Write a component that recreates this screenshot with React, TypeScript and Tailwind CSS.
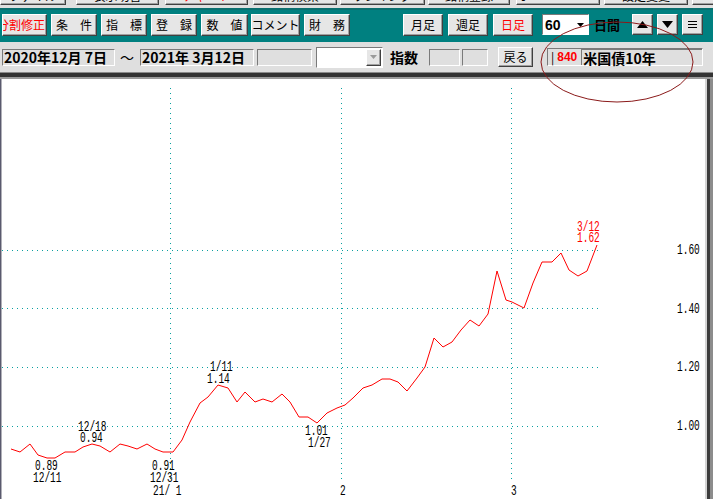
import React from 'react';

const jp = "font-['Noto_Sans_CJK_JP','Noto_Sans',sans-serif]";
const raised =
  'border border-t-white border-l-white border-b-[#404040] border-r-[#404040] shadow-[inset_-1px_-1px_0_#a0a0a0]';
const sunken = 'border border-t-[#7a7a7a] border-l-[#7a7a7a] border-b-white border-r-white';

function Btn({ label, className = '', red = false }: { label: React.ReactNode; className?: string; red?: boolean }) {
  return (
    <div
      className={`h-[22px] shrink-0 flex items-center justify-center overflow-hidden bg-[#e6e6e6] ${raised} text-[12px] leading-none whitespace-nowrap ${
        red ? 'text-[#ff0000]' : 'text-black'
      } ${className}`}
    >
      {label}
    </div>
  );
}

const line: [number, number][] = [
  [11, 449], [20, 452], [30, 444], [38, 455], [47, 458], [55, 458], [65, 452], [75, 452],
  [83, 447], [92, 444], [100, 446], [110, 452], [120, 444], [128, 446], [137, 449], [147, 444],
  [155, 449], [163, 452], [173, 452], [182, 440], [190, 422], [200, 403], [208, 397], [218, 385],
  [228, 388], [237, 402], [245, 392], [255, 402], [263, 399], [272, 402], [282, 394], [290, 402],
  [299, 417], [308, 417], [317, 423], [327, 413], [337, 408], [345, 405], [353, 398], [363, 388],
  [372, 385], [382, 379], [390, 379], [398, 382], [407, 391], [417, 378], [425, 367], [434, 338],
  [443, 347], [452, 342], [461, 330], [470, 320], [479, 326], [488, 314], [497, 271], [506, 300],
  [512, 302], [524, 308], [533, 283], [542, 262], [552, 262], [561, 253], [569, 270], [578, 276],
  [587, 271], [597, 245],
];

// chart labels: text, x, baseline, colour
const labels: [string, number, number, string][] = [
  ['0.89', 35, 470, '#000'],
  ['12/11', 33, 482, '#000'],
  ['12/18', 78, 431, '#000'],
  ['0.94', 80, 442, '#000'],
  ['0.91', 152, 470, '#000'],
  ['12/31', 150, 482, '#000'],
  ['1/11', 210, 371, '#000'],
  ['1.14', 207, 383, '#000'],
  ['1.01', 305, 435, '#000'],
  ['1/27', 308, 447, '#000'],
  ['21/ 1', 153, 495, '#000'],
  ['2', 340, 495, '#000'],
  ['3', 511, 495, '#000'],
  ['3/12', 577, 231, '#ff0000'],
  ['1.62', 577, 242, '#ff0000'],
  ['1.60', 677, 254, '#000'],
  ['1.40', 677, 313, '#000'],
  ['1.20', 677, 371, '#000'],
  ['1.00', 677, 430, '#000'],
];

function Chart() {
  return (
    <svg width="705" height="420" viewBox="0 79 705 420" className="block shrink-0">
      <rect x="0" y="79" width="705" height="420" fill="#fff" />
      <rect x="0" y="79" width="1" height="420" fill="#5a5a6e" />
      <rect x="1" y="79" width="1" height="420" fill="#b0b0b8" />
      {[250.5, 308.5, 367.5, 426.5].map((y) => (
        <line key={y} x1="2" x2="602" y1={y} y2={y} stroke="#0aa0a0" strokeDasharray="1 4" />
      ))}
      {[170.5, 341.5, 511.5].map((x) => (
        <line key={x} x1={x} x2={x} y1="88" y2="481" stroke="#0aa0a0" strokeDasharray="1 4" />
      ))}
      <polyline points={line.map((p) => p.join(',')).join(' ')} fill="none" stroke="#ff0000" strokeWidth="1" />
      {labels.map(([t, x, y, c]) => (
        <text
          key={t + x + y}
          x={x}
          y={y}
          fill={c}
          fontFamily="'Liberation Mono', monospace"
          fontSize="14"
          textLength={t.length * 5.7}
          lengthAdjust="spacingAndGlyphs"
        >
          {t}
        </text>
      ))}
    </svg>
  );
}

function Tri({ down = false }: { down?: boolean }) {
  return (
    <svg width="11" height="7" viewBox="0 0 11 7">
      <polygon points={down ? '0,0 11,0 5.5,7' : '0,7 11,7 5.5,0'} fill="#000" />
    </svg>
  );
}

export default function App() {
  return (
    <div className={`relative w-[713px] h-[499px] overflow-hidden bg-[#dfdfdf] flex flex-col ${jp}`}>
      {/* cut-off buttons of the menu strip above */}
      <div className="h-[8px] shrink-0 overflow-hidden flex items-start">
        {[
          ['ファイル', 'w-[66px]', false],
          ['表示切替', 'ml-[10px] w-[83px]', false],
          ['チャート', 'ml-[6px] w-[83px]', true],
          ['銘柄検索', 'ml-[5px] w-[84px]', false],
          ['ランキング', 'ml-[3px] w-[85px]', false],
          ['銘柄登録', 'ml-[3px] w-[82px]', false],
          ['ポートフォリオ', 'ml-[6px] w-[84px]', false],
          ['設定変更', 'ml-[4px] w-[84px]', false],
          ['ヘルプ', 'ml-[4px] w-[70px]', false],
        ].map(([t, c, r]) => (
          <div
            key={t as string}
            className={`h-[22px] -mt-[17px] shrink-0 flex items-end justify-center pb-[2px] bg-[#e6e6e6] ${raised} text-[12px] leading-none ${
              r ? 'text-[#ff0000]' : 'text-black'
            } ${c}`}
          >
            {t}
          </div>
        ))}
      </div>

      {/* teal toolbar */}
      <div className="h-[31px] shrink-0 bg-[#008080] border-t-[2px] border-[#0b6f6f] flex items-center">
        <Btn label="分割修正" red className="ml-[2px] w-[45px] !justify-end pr-[1px]" />
        <Btn label="条　件" className="ml-[4px] w-[46px]" />
        <Btn label="指　標" className="ml-[4px] w-[46px]" />
        <Btn label="登　録" className="ml-[4px] w-[46px]" />
        <Btn label="数　値" className="ml-[4px] w-[47px]" />
        <Btn label="コメント" className="ml-[3px] w-[49px]" />
        <Btn label="財　務" className="ml-[4px] w-[46px]" />
        <Btn label="月足" className="ml-[53px] w-[40px]" />
        <Btn label="週足" className="ml-[5px] w-[40px]" />
        <Btn label="日足" red className="ml-[5px] w-[40px]" />
        <div className={`ml-[9px] w-[47px] h-[21px] shrink-0 bg-white ${sunken} flex items-center justify-between pl-[2px] pr-[4px]`}>
          <span className="text-[14px] font-bold leading-none text-black font-['Liberation_Sans',sans-serif]">60</span>
          <svg width="7" height="4" viewBox="0 0 7 4">
            <polygon points="0,0 7,0 3.5,4" fill="#000" />
          </svg>
        </div>
        <span className="ml-[5px] w-[30px] text-[13px] font-bold leading-none text-black">日間</span>
        <Btn label={<Tri />} className="ml-[8px] w-[21px] !h-[21px]" />
        <Btn label={<Tri down />} className="ml-[4px] w-[21px] !h-[21px]" />
        <Btn
          label={
            <svg width="9" height="9" viewBox="0 0 9 9">
              <rect x="0" y="1" width="9" height="1" fill="#000" />
              <rect x="0" y="4" width="9" height="1" fill="#000" />
              <rect x="0" y="7" width="9" height="1" fill="#000" />
            </svg>
          }
          className="ml-[4px] w-[21px] !h-[21px]"
        />
      </div>

      {/* date / index row */}
      <div className="h-[33px] shrink-0 border-t-[3px] border-[#008080] flex items-center text-black">
        <div className={`ml-[2px] w-[113px] h-[17px] shrink-0 ${sunken} flex items-center pl-[1px] text-[14px] font-bold leading-none whitespace-nowrap`}>
          2020年12月 7日
        </div>
        <span className="ml-[5px] w-[20px] text-[14px] leading-none">～</span>
        <div className={`w-[114px] h-[17px] shrink-0 ${sunken} flex items-center pl-[1px] text-[14px] font-bold leading-none whitespace-nowrap overflow-hidden`}>
          2021年 3月12日
        </div>
        <div className={`ml-[3px] w-[55px] h-[17px] shrink-0 ${sunken}`} />
        <div className={`ml-[4px] w-[67px] h-[21px] shrink-0 bg-white ${sunken} flex justify-end p-[1px]`}>
          <div className={`w-[15px] h-full bg-[#e6e6e6] ${raised} flex items-center justify-center`}>
            <svg width="7" height="4" viewBox="0 0 7 4">
              <polygon points="0,0 7,0 3.5,4" fill="#9a9a9a" />
            </svg>
          </div>
        </div>
        <span className="ml-[7px] w-[39px] text-[14px] font-bold leading-none">指数</span>
        <div className={`w-[31px] h-[17px] shrink-0 ${sunken}`} />
        <div className={`ml-[2px] w-[26px] h-[17px] shrink-0 ${sunken}`} />
        <Btn label="戻る" className="ml-[10px] w-[35px] !h-[20px]" />
        <div className={`ml-[14px] w-[156px] h-[18px] shrink-0 ${sunken} flex items-center`}>
          <span className="ml-[3px] text-[12px] leading-none">|</span>
          <span className="ml-[3px] text-[12px] font-bold leading-none text-[#ff0000] font-['Liberation_Sans',sans-serif]">840</span>
          <div className={`ml-[4px] flex-1 h-full ${sunken} !border-r-0 !border-b-0 flex items-center pl-[1px] text-[14px] font-bold leading-none whitespace-nowrap`}>
            米国債10年
          </div>
        </div>
      </div>

      {/* frame edge */}
      <div className="h-[7px] shrink-0 bg-[#333] border-t-[1px] border-t-[#8a8a8a] border-b-[2px] border-b-[#9a9a9a]" />

      {/* chart */}
      <div className="flex-1 flex">
        <Chart />
        <div className="w-[8px] flex">
          <div className="w-[2px] bg-[#d4d4d4]" />
          <div className="w-[3px] bg-[#3c3c3c]" />
          <div className="w-[3px] bg-[#8c8c8c]" />
        </div>
      </div>

      {/* hand-drawn annotation ellipse */}
      <svg className="absolute inset-0 pointer-events-none" width="713" height="499">
        <ellipse cx="617" cy="62" rx="76" ry="40" fill="none" stroke="#8b1a1a" strokeWidth="1" />
      </svg>
    </div>
  );
}
